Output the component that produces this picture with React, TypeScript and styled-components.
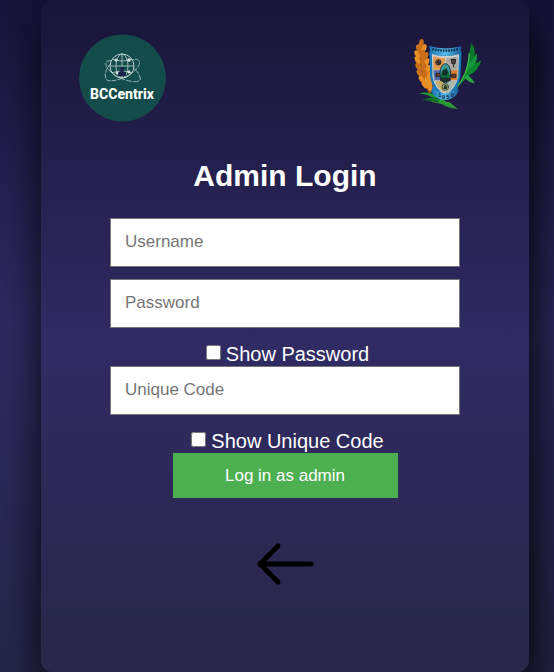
import React, { useState } from "react";
import styled, { createGlobalStyle } from "styled-components";

const GlobalStyle = createGlobalStyle`
  *, *::before, *::after { box-sizing: border-box; }
  body {
    margin: 0;
    font-family: "Liberation Sans", Arial, sans-serif;
    color: #fff;
  }
`;

const Page = styled.main`
  display: flex;
  min-height: 100vh;
  padding: 0 25px 0 41px;
  background: linear-gradient(to bottom, #17133a, #302b63 48%, #26264a);
  overflow: hidden;
`;

const Card = styled.section`
  display: flex;
  flex: 1;
  flex-direction: column;
  align-items: center;
  padding: 34px 38px 40px;
  border-radius: 12px;
  background: linear-gradient(to bottom, #191538, #302b63 51%, #282748);
  box-shadow: 5px 20px 50px #000;
`;

const Header = styled.header`
  display: flex;
  align-self: stretch;
  justify-content: space-between;
  padding-right: 7px;
`;

const Brand = styled.svg`
  display: block;
  width: 88px;
  height: 88px;
`;

const Crest = styled.svg`
  display: block;
  width: 70px;
  height: 74px;
  margin-top: 4px;
`;

const Title = styled.h1`
  margin: 36px 0 25px;
  font-size: 30px;
  line-height: 35px;
  font-weight: 700;
`;

const Form = styled.form`
  display: flex;
  flex-direction: column;
  align-items: center;
  width: 100%;
  max-width: 350px;
`;

const Field = styled.input`
  width: 100%;
  height: 49px;
  margin-bottom: 12px;
  padding: 0 14px 2px;
  border: 1px solid #767676;
  border-radius: 0;
  background: #fff;
  color: #222;
  font: 17px "Liberation Sans", Arial, sans-serif;

  &::placeholder { color: #757575; }
`;

const Toggle = styled.label`
  display: flex;
  align-items: center;
  gap: 5px;
  height: 26px;
  padding: 3px 0 0 5px;
  font-size: 20px;
  line-height: 23px;
`;

const Check = styled.input`
  width: 15px;
  height: 15px;
  margin: 0 0 4px;
`;

const Submit = styled.button`
  width: 225px;
  height: 45px;
  padding: 0;
  border: 0;
  background: #4caf50;
  color: #fff;
  font: 17px "Liberation Sans", Arial, sans-serif;
  cursor: pointer;
`;

const Back = styled.a`
  display: block;
  margin-top: 44px;
`;

const Arrow = styled.svg`
  display: block;
  width: 58px;
  height: 44px;
`;

function BrandLogo() {
  return (
    <Brand viewBox="0 0 88 88" role="img" aria-label="BCCentrix">
      <circle cx="43.5" cy="44" r="43.5" fill="#144b4b" />
      <g fill="none" stroke="#b9cfcd" strokeWidth="1">
        <circle cx="43" cy="32" r="12" />
        <ellipse cx="43" cy="32" rx="6" ry="12" strokeWidth=".8" />
        <path d="M43 20v24M31 32h24M33 25q10 4 20 0M33 39q10-4 20 0" strokeWidth=".8" />
        <path d="M32 29C27 35 25 41 27 45c2 4 14 1 23-4 8-5 12-11 10-14-1-2-4-2-7-1" strokeDasharray="5 1" strokeWidth=".8" />
        <path d="M33 27c-5-1-7 1-6 4 2 6 11 13 20 15 9 3 16 2 14-3-1-3-3-6-6-9" strokeDasharray="6 1" strokeWidth=".8" />
      </g>
      <g fill="#d9e6e4">
        <circle cx="37" cy="26" r="1.5" />
        <circle cx="50" cy="26" r="1.8" />
        <circle cx="38" cy="39" r="1.4" />
        <circle cx="50" cy="38" r="1.4" />
      </g>
      <circle cx="43" cy="35" r="2.2" fill="#17264b" />
      <path d="M39 42q0-5 4-5t4 5z" fill="#17264b" />
      <text
        x="43"
        y="65"
        textAnchor="middle"
        fill="#fff"
        fontFamily="Roboto, sans-serif"
        fontSize="14"
        fontWeight="800"
      >
        BCCentrix
      </text>
    </Brand>
  );
}

const leftGrains = [
  [52, 40, 8], [44, 56, -22], [60, 55, 22], [40, 73, -28], [55, 72, 15],
  [65, 78, 24], [41, 91, -30], [56, 92, 12], [68, 97, 20], [43, 110, -30],
  [59, 112, 10], [72, 117, 18], [47, 130, -34], [63, 132, 6], [76, 137, 14],
  [54, 149, -38], [70, 153, -8], [80, 157, 8], [63, 165, -40], [77, 171, -20],
];

function CrestLogo() {
  return (
    <Crest viewBox="30 24 210 222" role="img" aria-label="Official seal, 1950">
      <defs>
        <linearGradient id="ribbon" x2="1">
          <stop offset="0" stopColor="#1672b5" />
          <stop offset=".5" stopColor="#58bce8" />
          <stop offset="1" stopColor="#155b99" />
        </linearGradient>
      </defs>
      <path d="M52 42Q46 110 84 186" fill="none" stroke="#a65410" strokeWidth="20" />
      {leftGrains.map(([x, y, angle]) => (
        <ellipse
          key={`${x}-${y}`}
          cx={x}
          cy={y}
          rx="7"
          ry="13"
          fill={y % 2 ? "#e79026" : "#c96f18"}
          transform={`rotate(${angle} ${x} ${y})`}
        />
      ))}
      <path d="M202 38q20 24 2 62l-22 50 10-62z" fill="#08782b" />
      <path d="M219 69q3 34-22 55l-21 32 17-52z" fill="#14963a" />
      <path d="M232 91q-10 34-36 44l-31 31q24-55 67-75z" fill="#0b852b" />
      <path d="M188 133q19 14 24 27-17-2-30-17z" fill="#23a43f" />
      <path d="M196 70Q195 127 155 178" fill="none" stroke="#43b94b" strokeWidth="4" />
      <path d="M45 190q34-10 73 19l42 28q-40-3-70-33-22-12-45-14z" fill="#239b35" />
      <path d="M53 210q30-14 61-5l-23 12q-20-9-38-7z" fill="#116f26" />
      <path d="M112 216l-38-2 50 10 38 14-26-22z" fill="#2f9636" />
      <path d="M80 67q44 15 89 0l-3 73q-5 37-42 60-38-23-42-61z" fill="#c9cccb" stroke="#187ab7" strokeWidth="7" />
      <path d="M88 79q17 6 35 6v34H88z" fill="#e39a50" />
      <path d="M126 85q20 0 35-6v40h-35z" fill="#aaa7a2" />
      <path d="M88 121h35v30H91z" fill="#566ca7" />
      <path d="M126 121h35l-3 30h-32z" fill="#d97930" />
      <path d="M94 153h29v37q-22-13-29-37z" fill="#c4ac6e" />
      <path d="M126 153h30q-6 23-30 37z" fill="#a9b9ad" />
      <g fill="none" stroke="#252427" strokeWidth="3">
        <circle cx="103" cy="97" r="8" />
        <path d="M95 97h16M103 89v16M98 92l10 10M108 92l-10 10" />
        <path d="M141 88h14l-2 13h-9zM149 101v11" fill="#51443d" />
        <path d="M96 130h14v10H96zM143 133h13v9h-13z" fill="#704328" />
      </g>
      <ellipse cx="124" cy="130" rx="16" ry="29" fill="#3d9b9e" stroke="#18333e" strokeWidth="3" />
      <path d="M111 133q7-18 14-19 9 7 12 20v15h-26z" fill="#0a6b38" />
      <path d="M116 121h8l3-8 5 15-5 8h-13z" fill="#122e29" />
      <path d="M108 143h32v9q-17 8-32 0z" fill="#222b2d" />
      <circle cx="124" cy="171" r="10" fill="#9fb17c" stroke="#1e2725" strokeWidth="2" />
      <path d="M118 177l4-13 9 5-3 9z" fill="#283e2a" />
      <path d="M75 48q49 14 97 1l-3 22q-44 12-85 0l-9 6 4-13z" fill="url(#ribbon)" />
      <path d="M85 57q39 10 79 0" fill="none" stroke="#102e51" strokeWidth="7" strokeDasharray="5 3" />
      <path d="M88 166q8 23 36 24 27-1 35-24l5 18q-11 24-40 26-28-1-43-25z" fill="url(#ribbon)" />
      <g fill="#0b2044" fontFamily="Liberation Sans, sans-serif" fontSize="17" fontWeight="700">
        <text x="103" y="201">1</text>
        <text x="114" y="206">9</text>
        <text x="127" y="206">5</text>
        <text x="140" y="201">0</text>
      </g>
    </Crest>
  );
}

export default function App() {
  const [showPassword, setShowPassword] = useState(false);
  const [showCode, setShowCode] = useState(false);

  return (
    <>
      <GlobalStyle />
      <Page>
        <Card>
          <Header>
            <BrandLogo />
            <CrestLogo />
          </Header>
          <Title>Admin Login</Title>
          <Form onSubmit={(event) => event.preventDefault()}>
            <Field type="text" placeholder="Username" aria-label="Username" />
            <Field
              type={showPassword ? "text" : "password"}
              placeholder="Password"
              aria-label="Password"
            />
            <Toggle>
              <Check
                type="checkbox"
                checked={showPassword}
                onChange={(event) => setShowPassword(event.target.checked)}
              />
              Show Password
            </Toggle>
            <Field
              type={showCode ? "text" : "password"}
              placeholder="Unique Code"
              aria-label="Unique Code"
            />
            <Toggle>
              <Check
                type="checkbox"
                checked={showCode}
                onChange={(event) => setShowCode(event.target.checked)}
              />
              Show Unique Code
            </Toggle>
            <Submit type="submit">Log in as admin</Submit>
          </Form>
          <Back href="#" aria-label="Back">
            <Arrow viewBox="0 0 58 44" aria-hidden="true">
              <path
                d="M22 4 4 22l18 18M4 22h51"
                fill="none"
                stroke="#000"
                strokeWidth="5"
                strokeLinecap="round"
                strokeLinejoin="round"
              />
            </Arrow>
          </Back>
        </Card>
      </Page>
    </>
  );
}
